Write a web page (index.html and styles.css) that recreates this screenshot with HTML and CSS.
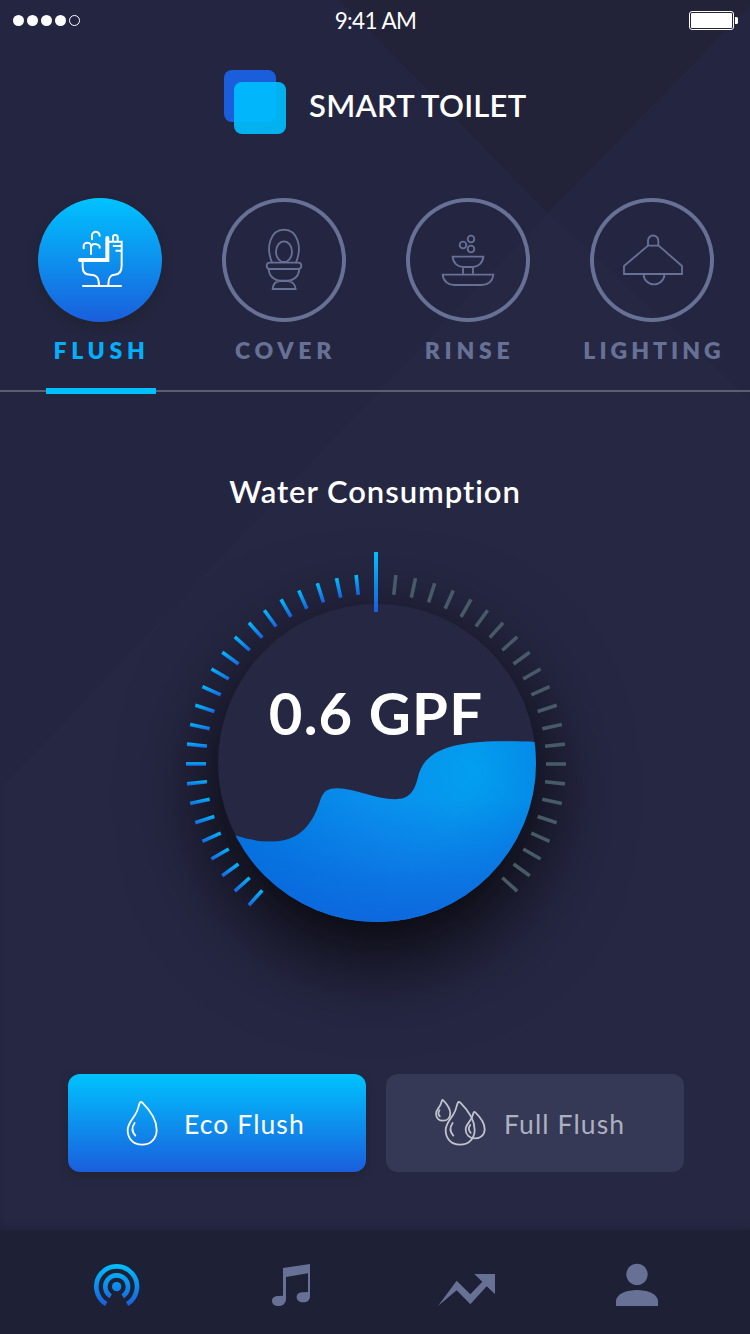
FILE: index.html
```html
<!DOCTYPE html>
<html lang="en">
<head>
<meta charset="utf-8">
<title>Smart Toilet</title>
<link rel="stylesheet" href="styles.css">
</head>
<body>
<div class="screen">
  <svg class="backdrop" viewBox="0 0 750 1334" aria-hidden="true">
    <path d="M0 0H340L548 213L4 785V1334H0Z" fill="#242540"/>
    <path d="M340 0H756L548 213Z" fill="#222339"/>
    <path d="M750 6L548 213L750 400Z" fill="#242540"/>
  </svg>

  <header class="status">
    <div class="signal"><i></i><i></i><i></i><i></i><i class="off"></i></div>
    <span class="time">9:41 AM</span>
    <svg class="battery" viewBox="0 0 49 19">
      <rect x=".5" y=".5" width="44" height="18" rx="2.5" fill="none" stroke="#fff"/>
      <rect x="2" y="2" width="41" height="15" rx="1" fill="#fff"/>
      <path d="M46 6h1.500q1.500 0 1.500 1.500v4q0 1.500-1.500 1.500H46z" fill="#fff"/>
    </svg>
  </header>

  <div class="brand">
    <svg class="logo" viewBox="0 0 62 64">
      <rect width="52" height="52" rx="8" fill="#1a5edc"/>
      <rect x="10" y="12" width="52" height="52" rx="8" fill="#00bfff" opacity=".91"/>
    </svg>
    <h1 class="brand-name">SMART TOILET</h1>
  </div>

  <nav class="tabs">
    <a class="tab active">
      <span class="disc"><svg viewBox="54 54 372 372" class="line-icon">
        <path class="thick" d="M180 240H262V174"/>
        <path d="M268 185H305V256C305 275 297 284 284 284C270 284 265 294 265 318M188 246V260C188 278 198 284 211 284C230 284 237 293 237 318M189 318H303"/>
        <path d="M279 183V172a7 7 0 0 1 14 0V183M281 198H303M289 212H303"/>
        <path d="M216 178V167a11 11 0 0 1 23 0M191 205V198a11 10 0 0 1 22 0V222M213 200a13 9 0 0 1 26 3"/>
      </svg></span>
      <span class="label">FLUSH</span>
    </a>
    <a class="tab">
      <span class="disc"><svg viewBox="66 54 372 372" class="line-icon">
        <path d="M216 247C196 200 212 150 252 149C292 150 308 200 288 247"/>
        <ellipse cx="252" cy="215" rx="24" ry="31"/>
        <rect x="200" y="248" width="104" height="19" rx="9.500"/>
        <path d="M206 268C208 290 225 302 240 302H264C280 302 296 290 298 268M218 327H287C286 312 275 303 262 303H242C228 303 219 312 218 327Z"/>
      </svg></span>
      <span class="label">COVER</span>
    </a>
    <a class="tab">
      <span class="disc"><svg viewBox="48 54 372 372" class="line-icon">
        <circle cx="243" cy="177" r="10"/><circle cx="219" cy="195" r="10"/><circle cx="243" cy="207" r="10"/>
        <path d="M188 230H280C279 250 262 261 248 261H220C204 261 189 250 188 230ZM219 261V284M249 261V284M158 284H310C308 305 292 315 275 315H193C175 315 159 303 158 284Z"/>
      </svg></span>
      <span class="label">RINSE</span>
    </a>
    <a class="tab">
      <span class="disc"><svg viewBox="60 54 372 372" class="line-icon">
        <path d="M234 197V182a15 15 0 0 1 31 0V197M234 197H266L336 258V282H162V258ZM221 284a31 29 0 0 0 62 0"/>
      </svg></span>
      <span class="label long">LIGHTING</span>
    </a>
  </nav>
  <div class="rule"><div class="indicator"></div></div>

  <main class="usage">
    <h2 class="usage-title">Water Consumption</h2>
    <div class="gauge">
      <div class="dial"></div>
      <svg class="gauge-art" viewBox="176 544 400 400">
        <defs>
          <linearGradient id="blue" x1="0" y1="0" x2="0" y2="1"><stop offset="0" stop-color="#00c0ff"/><stop offset="1" stop-color="#1a5edc"/></linearGradient>
          <radialGradient id="water" gradientUnits="userSpaceOnUse" cx="478" cy="772" r="260"><stop offset="0" stop-color="#029fef"/><stop offset=".45" stop-color="#0a8eec"/><stop offset="1" stop-color="#0078e0"/></radialGradient>
          <radialGradient id="side" gradientUnits="userSpaceOnUse" cx="377" cy="763" r="159"><stop offset=".6" stop-color="#0070dc" stop-opacity="0"/><stop offset="1" stop-color="#0070dc" stop-opacity=".28"/></radialGradient>
          <linearGradient id="deep" gradientUnits="userSpaceOnUse" x1="0" y1="800" x2="0" y2="922"><stop offset="0" stop-color="#1061dc" stop-opacity="0"/><stop offset="1" stop-color="#1061dc" stop-opacity=".75"/></linearGradient>
          <clipPath id="bowl"><circle cx="377" cy="763" r="159"/></clipPath>
          <path id="wave" d="M233.300 835C250 840 260 841.600 271 841.600C296 841.600 311 829 320 801C323 791 328 788.300 337 788.300C355 788.300 375 799.200 395 799.200C411 799.200 415 789 418 777C424 751 450 741.200 503 741.200C515 741.200 525 741.200 540 742.200V930H210V826Z"/>
        </defs>
        <g clip-path="url(#bowl)">
          <use href="#wave" fill="url(#water)"/>
          <use href="#wave" fill="url(#side)"/>
          <use href="#wave" fill="url(#deep)"/>
        </g>
        <g id="ticks"></g>
        <rect x="374" y="552" width="4" height="60" fill="url(#blue)"/>
      </svg>
      <div class="reading">0.6 GPF</div>
    </div>
  </main>

  <div class="actions">
    <button class="action primary">
      <svg class="drop" viewBox="225 110 105 150">
        <g id="drop"><path d="M272 125C266 126 268 145 255 164C245 180 233 190 233 210C233 235 250 253 276 253C302 253 320 235 320 208C320 175 295 145 277 127C275 125 273 124 272 125Z"/><path d="M254 188C244 202 246 215 256 226"/></g>
      </svg>
      <span class="eco">Eco Flush</span>
    </button>
    <button class="action">
      <svg class="drops" viewBox="171 110 162 150">
        <use href="#drop" transform="translate(-24 0)"/>
        <use href="#drop" transform="translate(116.400 77.500) scale(.655 .62)"/>
        <use href="#drop" transform="translate(66 58.400) scale(.49 .485)"/>
      </svg>
      <span class="full">Full Flush</span>
    </button>
  </div>

  <footer class="dock">
    <svg viewBox="81 111 180 180">
      <defs><linearGradient id="cast" gradientUnits="userSpaceOnUse" x1="0" y1="132" x2="0" y2="258"><stop offset="0" stop-color="#00c0ff"/><stop offset="1" stop-color="#1a5edc"/></linearGradient></defs>
      <circle cx="170" cy="200" r="14" fill="url(#cast)"/>
      <path d="M152 228.800A34 34 0 1 1 188 228.800M138.500 252.200A61 61 0 1 1 201.500 252.200" fill="none" stroke="url(#cast)" stroke-width="14"/>
    </svg>
    <svg viewBox="603 111 180 180"><path d="M669 144L750 132V228C750 240 742 247 730 247C718 247 710 241 710 231C710 221 719 217 730 217L744 216V160L678 171V236C678 250 668 258 656 258C644 258 636 252 636 242C636 233 644 228 655 228L669 227Z"/></svg>
    <svg viewBox="105 111 180 180"><path d="M114 258L170 182L211 223L247 185L223 162H285V222L260 199L211 253L170 211Z"/></svg>
    <svg viewBox="627 111 180 180"><circle cx="711" cy="163" r="32"/><path d="M648 258V242C650 222 680 210 711 210C742 210 772 222 774 242V258Z"/></svg>
  </footer>
</div>
<script src="gauge.js"></script>
</body>
</html>
```
FILE: styles.css
```css
* { box-sizing: border-box; }
body { margin: 0; font-family: Lato, "Open Sans", sans-serif; color: #fff; background: #262743; }
.screen { position: relative; width: 750px; height: 1334px; overflow: hidden; display: flex; flex-direction: column; background: #262743; }
.screen > * { position: relative; flex: none; }
.screen > .backdrop { position: absolute; inset: 0; width: 750px; height: 1334px; }
h1, h2 { margin: 0; }

.status { height: 40px; display: grid; grid-template-columns: 1fr auto 1fr; align-items: center; padding: 0 12px 0 13px; }
.signal { display: flex; gap: 3px; }
.signal i { width: 11px; height: 11px; border-radius: 50%; background: #fff; }
.signal .off { background: none; border: 1px solid #fff; }
.time { font-size: 22.500px; line-height: 40px; letter-spacing: -.6px; padding-top: 1px; }
.battery { width: 49px; height: 19px; justify-self: end; }

.brand { height: 64px; margin-top: 30px; padding-left: 224px; display: flex; gap: 23px; }
.logo { width: 62px; height: 64px; }
.brand-name { font-size: 31px; line-height: 40px; margin-top: 15px; font-weight: 600; letter-spacing: .25px; white-space: nowrap; }

.tabs { margin-top: 64px; height: 192px; padding-left: 8px; display: grid; grid-template-columns: repeat(4, 184px); }
.tab { display: flex; flex-direction: column; align-items: center; color: #677195; }
.disc { width: 124px; height: 124px; border-radius: 50%; box-shadow: inset 0 0 0 4px #677195; }
.active .disc { background: linear-gradient(#00c3ff, #1a5edc); box-shadow: 0 4px 8px rgba(32, 34, 42, .7); }
.line-icon { display: block; width: 124px; height: 124px; fill: none; stroke: currentColor; stroke-width: 5.500; stroke-linecap: round; }
.active .line-icon { stroke: #fff; stroke-width: 6; }
.line-icon .thick { stroke-width: 12; }
.label { font-size: 23px; font-weight: 800; line-height: 28px; margin-top: 14px; padding-left: 3px; letter-spacing: 4.700px; white-space: nowrap; }
.label.long { letter-spacing: 4px; padding-left: 4px; }
.active .label { color: #03aefb; }
.rule { height: 2px; background: #5d5e70; }
.indicator { position: absolute; left: 46px; top: -2px; width: 110px; height: 6px; background: #00bfff; }

.usage { height: 682px; text-align: center; }
.usage-title { font-size: 31px; line-height: 40px; font-weight: 600; padding-top: 79px; letter-spacing: .95px; }
.gauge { position: relative; width: 400px; height: 400px; margin: 33px 0 0 176px; }
.dial { position: absolute; left: 42px; top: 60px; width: 318px; height: 318px; border-radius: 50%; background: #262743; box-shadow: 0 30px 92px rgba(2, 2, 2, .95); }
.gauge-art { position: absolute; inset: 0; width: 400px; height: 400px; }
.reading { position: absolute; left: 0; right: 0; top: 134px; font-size: 58px; line-height: 70px; font-weight: 700; letter-spacing: 1.200px; white-space: nowrap; }

.actions { display: flex; gap: 20px; padding-left: 68px; }
.action { width: 298px; height: 98px; border: 0; border-radius: 12px; padding: 0; display: flex; align-items: center; font: 400 26.500px Lato, sans-serif; letter-spacing: 1.100px; color: #adb0c0; background: #353955; text-align: left; white-space: nowrap; }
.primary { color: #fff; background: linear-gradient(#00c3ff, #1a5edc); box-shadow: 0 4px 8px rgba(32, 34, 42, .7); }
.action svg { height: 50px; margin-bottom: 2px; fill: none; stroke: #c0c2ce; stroke-linecap: round; }
.action path { vector-effect: non-scaling-stroke; stroke-width: 1.800px; }
.action span { padding-top: 1px; }
.action .drop { width: 35px; margin-left: 57px; stroke: #fff; }
.drops { width: 54px; margin-left: 47px; }
.eco { margin-left: 24px; }
.full { margin-left: 17px; }

.dock { margin-top: 58px; height: 104px; padding: 27px 24px 0 30px; display: grid; grid-template-columns: repeat(4, 174px); justify-items: center; background: #1e2035; box-shadow: 0 -2px 6px rgba(30, 32, 53, .6); }
.dock svg { width: 60px; height: 60px; fill: #677195; }
```
FILE: gauge.js
```js
// Ticks sit every 6 degrees: 23 lit ones to the left of the needle, 22 dim ones to the right.
const ticks = document.getElementById('ticks');
const cx = 376, cy = 764, inner = 170, outer = 190, half = 1.8;

function addTick(deg, fill) {
  const a = deg * Math.PI / 180;
  const ux = Math.sin(a), uy = -Math.cos(a);
  const corner = (r, s) => (cx + r * ux - s * uy) + ',' + (cy + r * uy + s * ux);
  const p = document.createElementNS('http://www.w3.org/2000/svg', 'polygon');
  p.setAttribute('points', [corner(inner, -half), corner(outer, -half), corner(outer, half), corner(inner, half)].join(' '));
  p.setAttribute('fill', fill);
  ticks.appendChild(p);
}

for (let i = 1; i <= 23; i++) addTick(-6 * i, 'url(#blue)');
for (let i = 1; i <= 22; i++) addTick(6 * i, '#465a68');
```
